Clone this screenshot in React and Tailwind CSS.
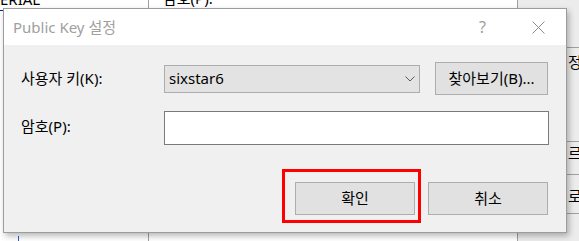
import React from "react";

const font = { fontFamily: '"Noto Sans", "Noto Sans CJK KR", sans-serif' };

function Chevron() {
  return (
    <svg width="10" height="6" viewBox="0 0 10 6" className="shrink-0">
      <path d="M0.5 0.5 L5 5 L9.5 0.5" fill="none" stroke="#5a5a5a" strokeWidth="1" />
    </svg>
  );
}

function CloseX() {
  return (
    <svg width="13" height="13" viewBox="0 0 13 13">
      <path d="M0.5 0.5 L12.5 12.5 M12.5 0.5 L0.5 12.5" fill="none" stroke="#8c8c8c" strokeWidth="1" />
    </svg>
  );
}

function WinButton({ children, className = "" }) {
  return (
    <button
      className={`h-[33px] bg-[#e1e1e1] border border-[#adadad] text-[15px] text-black flex items-center justify-center leading-none ${className}`}
    >
      {children}
    </button>
  );
}

export default function App() {
  return (
    <div className="w-[579px] h-[241px] relative overflow-hidden bg-white" style={font}>

      {/* Background window fragments */}
      <div className="absolute left-[517px] top-0 right-0 bottom-0 bg-[#ececec] border-l border-[#a0a0a0]" />
      <div className="absolute left-[148px] top-0 w-px h-full bg-[#a0a0a0]" />
      <div className="absolute left-0 top-[-8px] text-[15px] text-black leading-none whitespace-nowrap">ERIAL</div>
      <div className="absolute left-0 top-[10px] w-[3px] h-px bg-[#1a1a8a]" />
      <div className="absolute left-[163px] top-[-9px] text-[15px] text-black leading-none whitespace-nowrap">암호(P):</div>
      <div className="absolute left-[567px] top-[47px] right-0 h-px bg-[#a0a0a0]" />
      <div className="absolute left-[568px] top-[55px] text-[15px] text-black leading-none whitespace-nowrap">정(</div>
      <div className="absolute left-[567px] top-[141px] right-0 h-px bg-[#a0a0a0]" />
      <div className="absolute left-[568px] top-[146px] text-[15px] text-black leading-none whitespace-nowrap">르(</div>
      <div className="absolute left-[567px] top-[174px] right-0 h-px bg-[#a0a0a0]" />
      <div className="absolute left-[568px] top-[189px] text-[15px] text-black leading-none whitespace-nowrap">로</div>
      <div className="absolute left-[567px] top-[213px] right-0 h-px bg-[#a0a0a0]" />
      <div className="absolute left-[18px] top-[236px] w-px h-[5px] bg-[#2a5ad0]" />

      {/* Dialog window */}
      <div className="absolute left-[3px] top-[8px] w-[564px] h-[225px] border border-[#9c9c9c] bg-[#f0f0f0] flex flex-col shadow-[2px_3px_6px_rgba(0,0,0,0.28)]">

        {/* Title bar */}
        <div className="h-[36px] bg-white flex items-center pl-[9px] shrink-0">
          <span className="text-[15px] text-[#a0a0a0] leading-none">Public Key 설정</span>
          <span className="ml-auto text-[16px] text-[#a0a0a0] leading-none mr-[46px]">?</span>
          <span className="mr-[21px] flex"><CloseX /></span>
        </div>

        {/* Body */}
        <div className="flex-1 pt-[17px] pl-[17px] pr-[17px] flex flex-col">

          {/* User key row */}
          <div className="flex items-center h-[33px]">
            <label className="w-[143px] text-[15px] text-black leading-none">사용자 키(K):</label>
            <div className="w-[256px] h-[28px] bg-[#e3e3e3] border border-[#adadad] flex items-center pl-[4px] pr-[4px]">
              <span className="flex-1 text-[15px] text-black leading-none">sixstar6</span>
              <Chevron />
            </div>
            <WinButton className="w-[113px] ml-[15px]">찾아보기(B)...</WinButton>
          </div>

          {/* Password row */}
          <div className="flex items-center mt-[16px]">
            <label className="w-[143px] text-[15px] text-black leading-none -mt-[3px]">암호(P):</label>
            <input
              type="password"
              className="flex-1 h-[34px] bg-white border border-[#7a7a7a] outline-none"
            />
          </div>

          {/* Buttons */}
          <div className="flex justify-end gap-[13px] mt-[37px] mr-[1px]">
            <div className="relative">
              <WinButton className="w-[120px]">확인</WinButton>
              <div className="absolute left-[-13px] right-[-6px] top-[-13px] bottom-[-8px] border-[3px] border-[#ff0000] pointer-events-none" />
            </div>
            <WinButton className="w-[120px]">취소</WinButton>
          </div>
        </div>
      </div>
    </div>
  );
}
